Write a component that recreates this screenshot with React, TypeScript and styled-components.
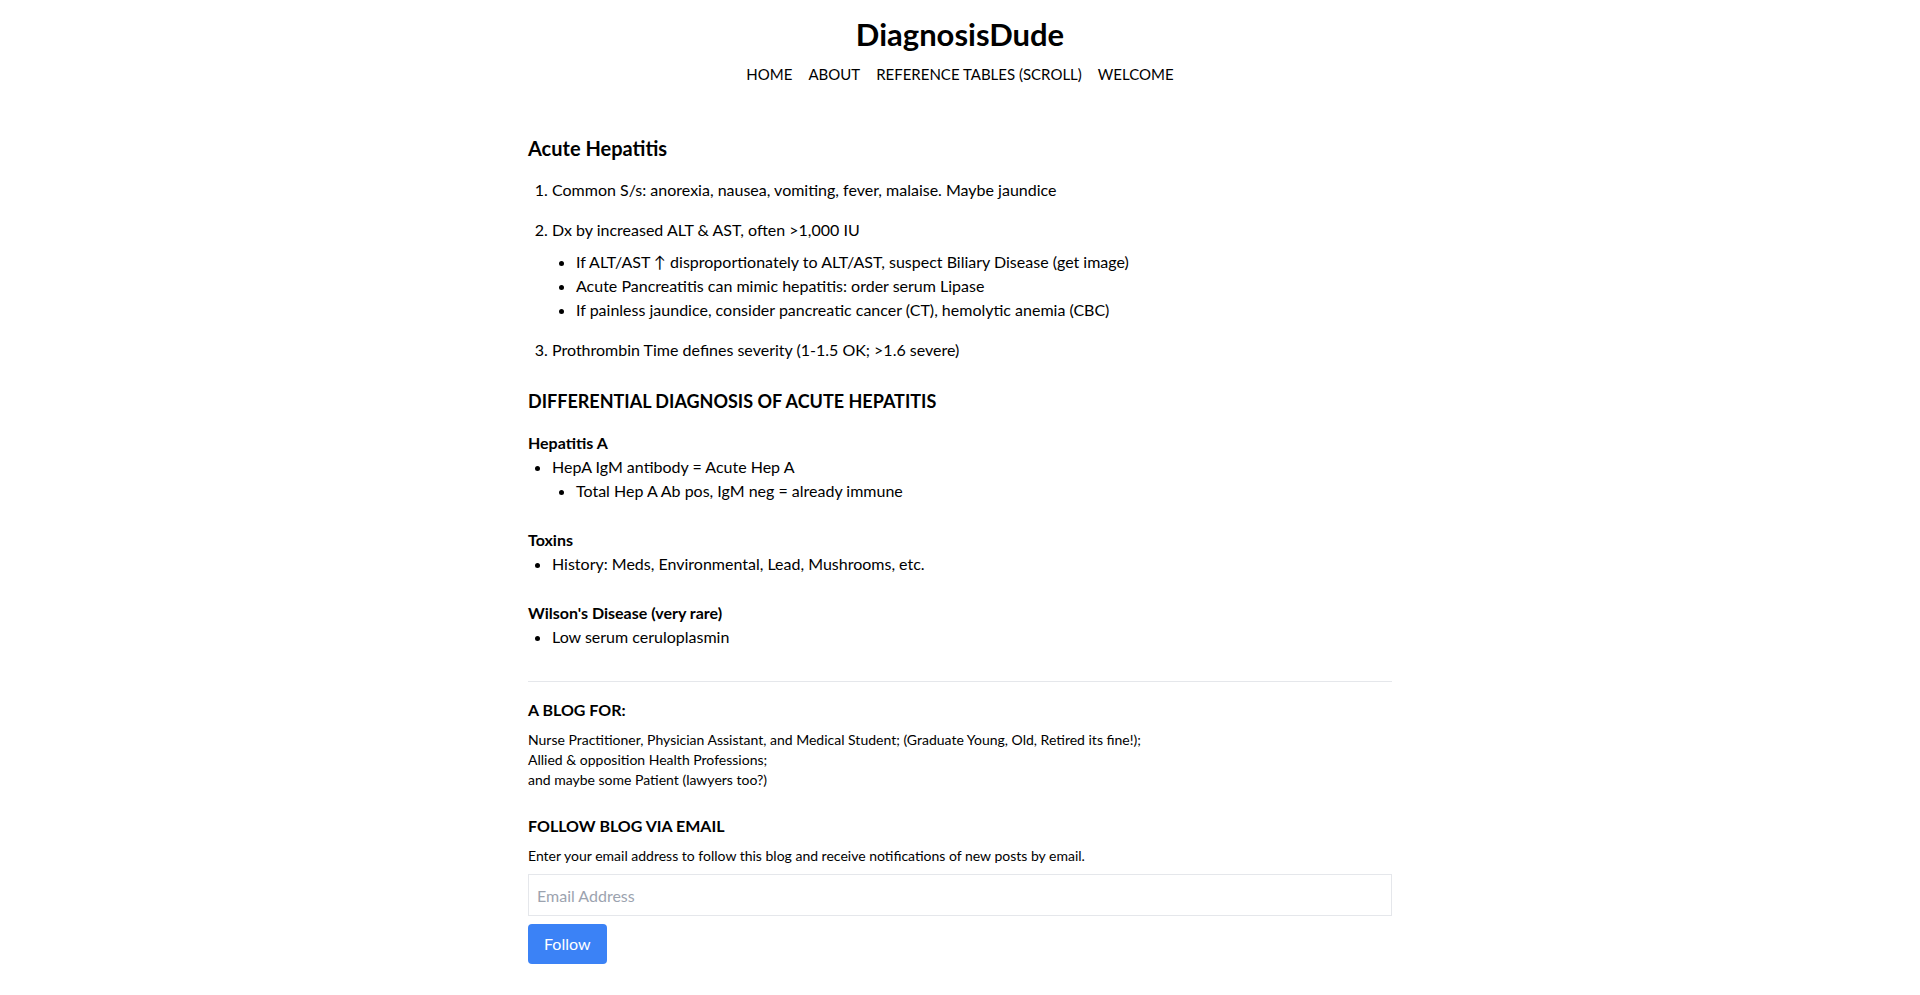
import React from "react";
import styled, { createGlobalStyle } from "styled-components";

const GlobalStyle = createGlobalStyle`
  html, body {
    margin: 0;
    padding: 0;
    background: #ffffff;
  }
  body {
    font-family: Lato, "Open Sans", "Noto Sans", sans-serif;
    color: #000000;
    font-size: 16px;
    line-height: 24px;
  }
  * { box-sizing: border-box; }
`;

const Page = styled.div`
  min-height: 995px;
  background: #ffffff;
`;

const Header = styled.header`
  display: flex;
  flex-direction: column;
  align-items: center;
  padding: 16px 16px 0;
`;

const SiteTitle = styled.h1`
  margin: 0 0 10px;
  font-size: 31px;
  line-height: 36px;
  font-weight: 700;
  color: #000;
`;

const Nav = styled.nav`
  display: flex;
  gap: 16px;
`;

const NavLink = styled.a`
  font-size: 15px;
  line-height: 24px;
  color: #000;
  text-decoration: none;
  text-transform: uppercase;
`;

const Main = styled.main`
  max-width: 896px;
  margin: 0 auto;
  padding: 48px 16px 32px;
`;

const PostTitle = styled.h2`
  margin: 0 0 16px;
  font-size: 20px;
  line-height: 28px;
  font-weight: 700;
`;

const NumberedList = styled.ol`
  margin: 0;
  padding-left: 24px;
  list-style: decimal;
`;

const NumberedItem = styled.li`
  margin-bottom: 16px;
  &:last-child { margin-bottom: 0; }
`;

const BulletList = styled.ul`
  margin: 0;
  padding-left: 24px;
  list-style: disc;
`;

const SubList = styled(BulletList)`
  margin-top: 8px;
`;

const SectionTitle = styled.h3`
  margin: 25px 0 16px;
  font-size: 18px;
  line-height: 28px;
  font-weight: 700;
  text-transform: uppercase;
`;

const DxGroup = styled.div`
  margin-bottom: 25px;
`;

const GroupTitle = styled.div`
  font-weight: 700;
`;

const Divider = styled.hr`
  margin: 32px 0 16px;
  border: 0;
  border-top: 1px solid #e5e7eb;
`;

const Widget = styled.section<{ $spaced?: boolean }>`
  margin-top: ${(p) => (p.$spaced ? "24px" : "0")};
`;

const WidgetTitle = styled.h4`
  margin: 0 0 8px;
  font-size: 16px;
  line-height: 24px;
  font-weight: 700;
  text-transform: uppercase;
`;

const WidgetText = styled.p`
  margin: 0;
  font-size: 14px;
  line-height: 20px;
`;

const EmailInput = styled.input`
  display: block;
  width: 100%;
  margin-top: 8px;
  padding: 8px;
  border: 1px solid #e5e7eb;
  font-family: inherit;
  font-size: 16px;
  line-height: 24px;
  height: 42px;
  outline: none;
  color: #000;
  &::placeholder { color: #9ca3af; }
`;

const FollowButton = styled.button`
  display: block;
  margin-top: 8px;
  padding: 8px 16px;
  border: 0;
  border-radius: 4px;
  background: #3b82f6;
  color: #ffffff;
  font-family: inherit;
  font-size: 16px;
  line-height: 24px;
  cursor: pointer;
`;

export default function App() {
  return (
    <Page>
      <GlobalStyle />
      <Header>
        <SiteTitle>DiagnosisDude</SiteTitle>
        <Nav>
          <NavLink href="#">Home</NavLink>
          <NavLink href="#">About</NavLink>
          <NavLink href="#">Reference Tables (Scroll)</NavLink>
          <NavLink href="#">Welcome</NavLink>
        </Nav>
      </Header>
      <Main>
        <article>
          <PostTitle>Acute Hepatitis</PostTitle>
          <NumberedList>
            <NumberedItem>Common S/s: anorexia, nausea, vomiting, fever, malaise. Maybe jaundice</NumberedItem>
            <NumberedItem>
              Dx by increased ALT &amp; AST, often &gt;1,000 IU
              <SubList>
                <li>If ALT/AST ↑ disproportionately to ALT/AST, suspect Biliary Disease (get image)</li>
                <li>Acute Pancreatitis can mimic hepatitis: order serum Lipase</li>
                <li>If painless jaundice, consider pancreatic cancer (CT), hemolytic anemia (CBC)</li>
              </SubList>
            </NumberedItem>
            <NumberedItem>Prothrombin Time defines severity (1-1.5 OK; &gt;1.6 severe)</NumberedItem>
          </NumberedList>

          <SectionTitle>Differential Diagnosis of Acute Hepatitis</SectionTitle>

          <DxGroup>
            <GroupTitle>Hepatitis A</GroupTitle>
            <BulletList>
              <li>
                HepA IgM antibody = Acute Hep A
                <BulletList>
                  <li>Total Hep A Ab pos, IgM neg = already immune</li>
                </BulletList>
              </li>
            </BulletList>
          </DxGroup>

          <DxGroup>
            <GroupTitle>Toxins</GroupTitle>
            <BulletList>
              <li>History: Meds, Environmental, Lead, Mushrooms, etc.</li>
            </BulletList>
          </DxGroup>

          <DxGroup>
            <GroupTitle>Wilson's Disease (very rare)</GroupTitle>
            <BulletList>
              <li>Low serum ceruloplasmin</li>
            </BulletList>
          </DxGroup>
        </article>

        <Divider />

        <Widget>
          <WidgetTitle>A Blog For:</WidgetTitle>
          <WidgetText>
            Nurse Practitioner, Physician Assistant, and Medical Student; (Graduate Young, Old, Retired its fine!);
            <br />
            Allied &amp; opposition Health Professions;
            <br />
            and maybe some Patient (lawyers too?)
          </WidgetText>
        </Widget>

        <Widget $spaced>
          <WidgetTitle>Follow Blog via Email</WidgetTitle>
          <WidgetText>Enter your email address to follow this blog and receive notifications of new posts by email.</WidgetText>
          <EmailInput type="email" placeholder="Email Address" />
          <FollowButton type="button">Follow</FollowButton>
        </Widget>
      </Main>
    </Page>
  );
}
